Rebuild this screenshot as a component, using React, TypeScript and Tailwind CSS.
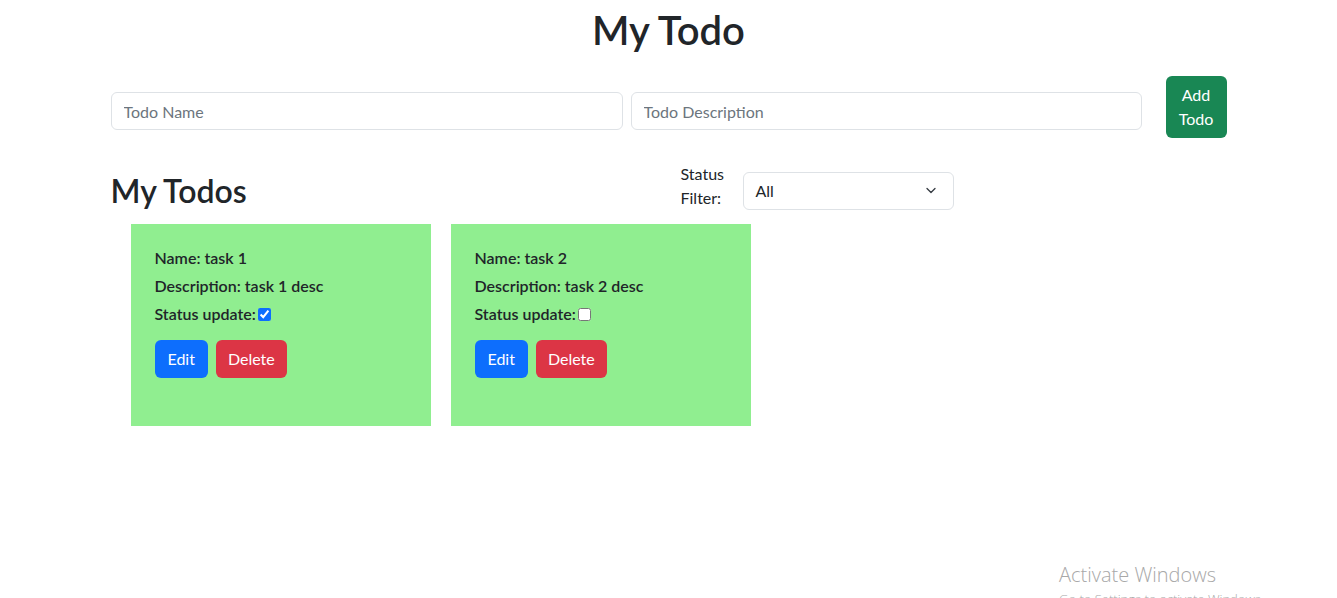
import { useState } from "react";

type Todo = { id: number; name: string; description: string; done: boolean };

const FONT = "font-['Lato','Noto_Sans',sans-serif]";

function TodoCard({ todo, onToggle }: { todo: Todo; onToggle: () => void }) {
  return (
    <div className="w-[300px] h-[202px] bg-[#90ee90] pl-6 pt-[22px] text-[#212529] font-semibold">
      <p className="leading-6 mb-1">Name: {todo.name}</p>
      <p className="leading-6 mb-1">Description: {todo.description}</p>
      <p className="leading-6 flex items-center">
        Status update:
        <input
          type="checkbox"
          checked={todo.done}
          onChange={onToggle}
          className="w-[13px] h-[13px] m-0 ml-[2px] accent-[#0d6efd]"
        />
      </p>
      <div className="flex gap-2 mt-[14px]">
        <button className="h-[38px] px-[13px] rounded-md bg-[#0d6efd] text-white font-normal">Edit</button>
        <button className="h-[38px] px-3 rounded-md bg-[#dc3545] text-white font-normal">Delete</button>
      </div>
    </div>
  );
}

export default function App() {
  const [todos, setTodos] = useState<Todo[]>([
    { id: 1, name: "task 1", description: "task 1 desc", done: true },
    { id: 2, name: "task 2", description: "task 2 desc", done: false },
  ]);

  const toggle = (id: number) =>
    setTodos((t) => t.map((x) => (x.id === id ? { ...x, done: !x.done } : x)));

  return (
    <div className={`${FONT} relative w-full h-[598px] overflow-hidden bg-white text-[#212529] text-base`}>
      <div className="w-[1116px] mx-auto pt-[6px]">
        <h1 className="text-[40px] leading-[48px] font-semibold text-center">My Todo</h1>

        <div className="flex items-start mt-[22px]">
          <input
            placeholder="Todo Name"
            className="w-[512px] h-[38px] mt-4 px-3 border border-[#dee2e6] rounded-md placeholder:text-[#6c757d] outline-none"
          />
          <input
            placeholder="Todo Description"
            className="w-[511px] h-[38px] mt-4 px-3 ml-2 border border-[#dee2e6] rounded-md placeholder:text-[#6c757d] outline-none"
          />
          <button className="w-[61px] ml-6 py-[7px] rounded-md bg-[#198754] text-white leading-6 text-center">
            Add
            <br />
            Todo
          </button>
        </div>

        <div className="flex items-end mt-6">
          <h2 className="w-[570px] text-[32px] leading-[38px] font-semibold">My Todos</h2>
          <label className="w-[62px] leading-6">
            Status
            <br />
            Filter:
          </label>
          <div className="relative w-[211px] h-[38px] border border-[#dee2e6] rounded-md flex items-center px-3">
            <span>All</span>
            <svg className="absolute right-[14px] top-[12px]" width="16" height="12" viewBox="0 0 16 12" fill="none">
              <path d="M4 3.5l4 4 4-4" stroke="#343a40" strokeWidth="1.3" strokeLinecap="round" strokeLinejoin="round" />
            </svg>
          </div>
        </div>

        <div className="flex gap-5 pl-5 mt-[14px]">
          {todos.map((t) => (
            <TodoCard key={t.id} todo={t} onToggle={() => toggle(t.id)} />
          ))}
        </div>
      </div>

      <div className="absolute left-[1059px] top-[563px] font-['Open_Sans',sans-serif] text-[#a8a8a8] font-light">
        <div className="text-[20px] leading-6">Activate Windows</div>
        <div className="text-[13px] leading-5 mt-[2px]">Go to Settings to activate Windows.</div>
      </div>
    </div>
  );
}
